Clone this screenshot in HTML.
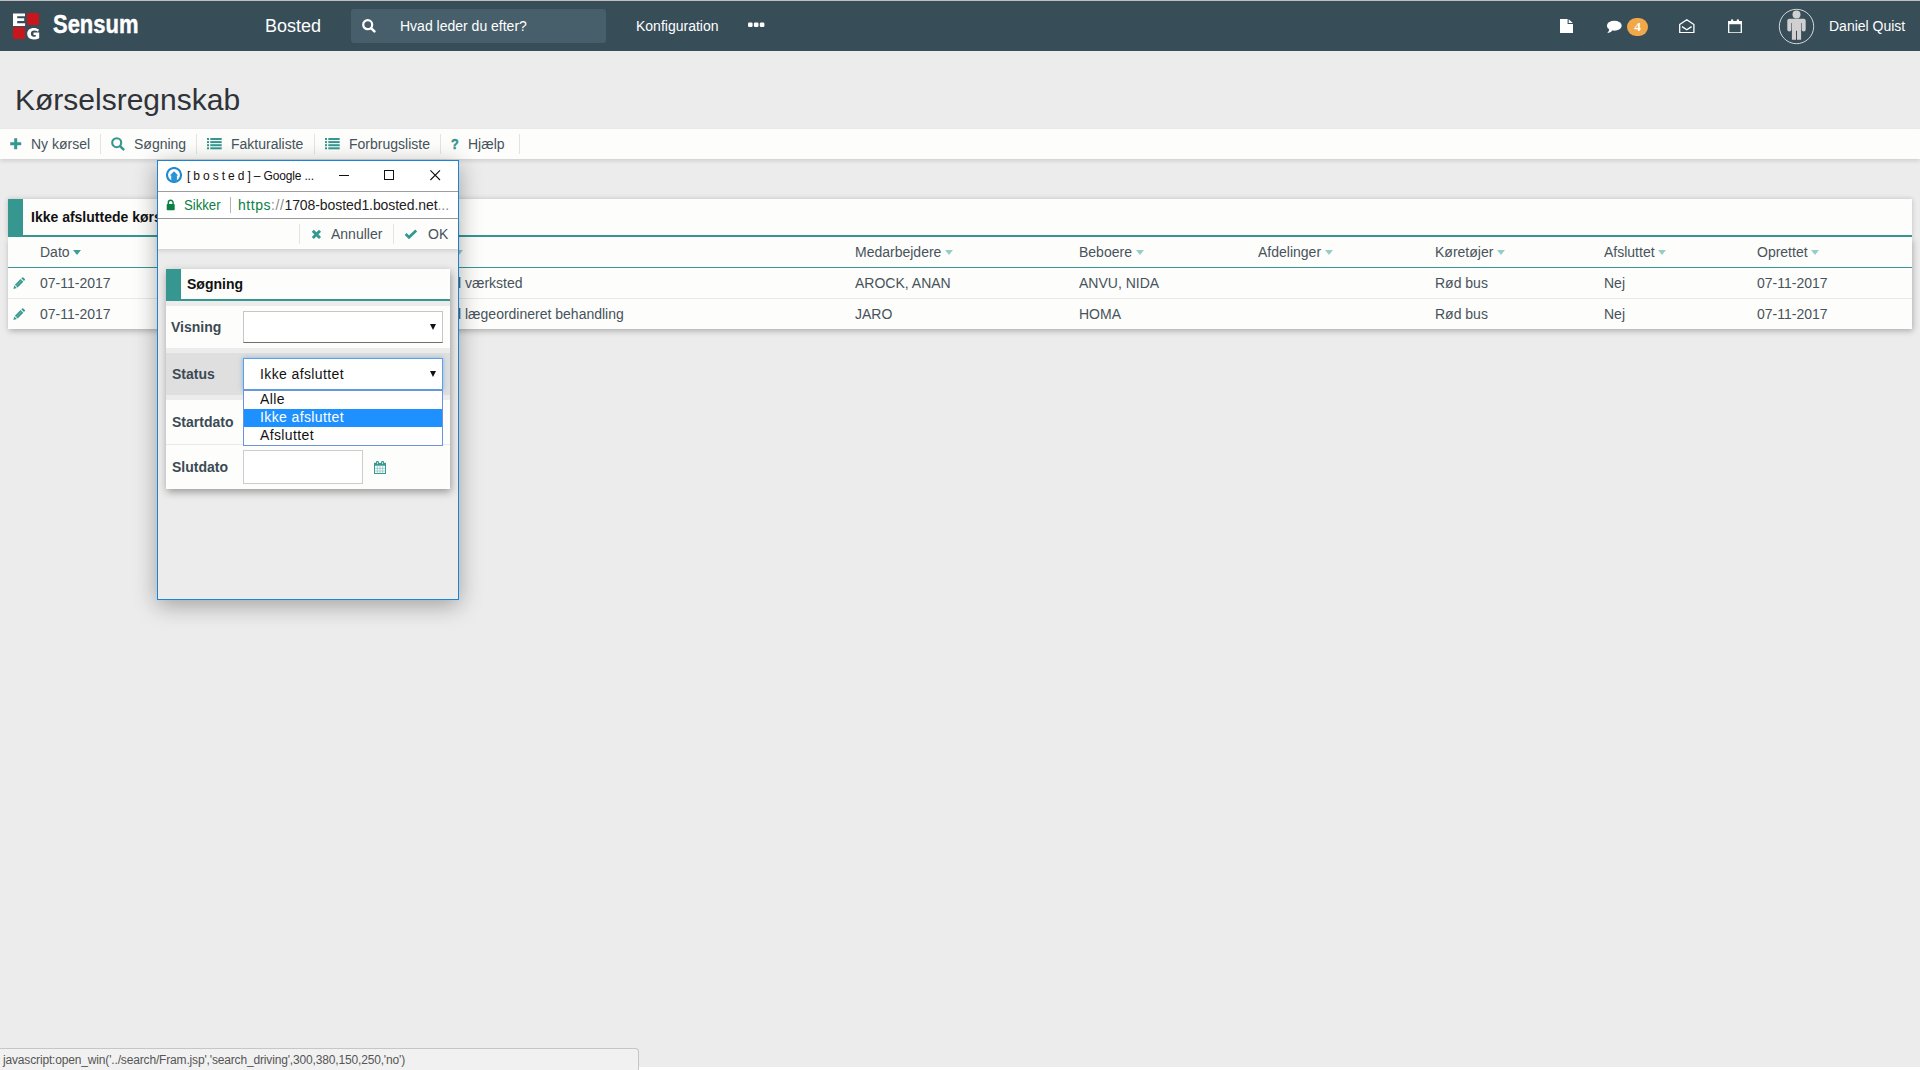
<!DOCTYPE html>
<html lang="da">
<head>
<meta charset="utf-8">
<title>Kørselsregnskab</title>
<style>
*{box-sizing:border-box;margin:0;padding:0}
html,body{width:1920px;height:1070px;overflow:hidden}
body{background:#ececec;font-family:"Liberation Sans",sans-serif;font-size:14px;color:#3b4a54;position:relative}
.abs{position:absolute}
.t{position:absolute;white-space:nowrap;line-height:1}
/* top nav */
#topline{left:0;top:0;width:1920px;height:1px;background:#c3bebe}
#nav{left:0;top:1px;width:1920px;height:50px;background:#374d58}
#nav .t{color:#fff}
#searchbox{left:351px;top:8px;width:255px;height:34px;background:#475f6b;border-radius:3px}
/* toolbar */
#toolbar{left:0;top:129px;width:1920px;height:30px;background:#fdfdfb;box-shadow:0 2px 4px rgba(0,0,0,.12)}
.tb{font-size:14px;color:#47535c;top:8px}
.sep{position:absolute;top:5px;width:1px;height:20px;background:#e4e4e2}
/* main panel */
#panel{left:8px;top:199px;width:1904px;height:130px;background:#fdfdfb}
.teal{background:#35978f}
.th{font-size:14px;color:#47535c;top:46px}
.td{font-size:14px;color:#47535c}
.cr{display:inline-block;width:0;height:0;border-left:4.700px solid transparent;border-right:4.700px solid transparent;border-top:5.200px solid #96cdc8;margin-left:3.800px;vertical-align:2px}
.cr.dk{border-top-color:#3aa19a}
.car{position:absolute;width:0;height:0;border-left:4.5px solid transparent;border-right:4.5px solid transparent;border-top:5px solid #8fcfca;top:51px}
/* popup */
#pop{left:157px;top:160px;width:302px;height:440px;background:#ececec;border:1px solid #1a84d8;box-shadow:0 5px 22px rgba(0,0,0,.33)}
.lbl{font-size:14px;font-weight:bold;color:#3b4a54}
.opt{font-size:14px;color:#111;letter-spacing:.38px}
.arrow{width:0;height:0;border-left:3.500px solid transparent;border-right:3.500px solid transparent;border-top:6px solid #111}
</style>
</head>
<body>
<div class="abs" id="topline"></div>
<div class="abs" id="nav">
  <!-- logo -->
  <svg class="abs" id="logo" style="left:13px;top:12px" width="27" height="27" viewBox="0 0 27 27">
    <rect x="14" y="0" width="12" height="12" rx="1.2" fill="#c8161d"/>
    <rect x="0" y="14" width="12" height="12" rx="1.2" fill="#c8161d"/>
    <path d="M0 0.400h12v2.900h-7.800v1.900h7v2.700h-7v2.300h7.900v2.900h-12.100z" fill="#fff"/>
    <path d="M26 16.4c-1.4-.9-3.2-1.5-5.2-1.5-4 0-6.6 2.300-6.600 5.800 0 3.500 2.500 5.700 6.500 5.700 2 0 3.900-.4 5.500-1.200v-5.600h-5.700v2.500h2.300v1.300c-.5.200-1.200.300-1.900.300-1.900 0-3-1.100-3-3 0-1.900 1.200-3.100 3.200-3.100 1.400 0 2.700.400 3.900 1.200z" fill="#fff"/>
  </svg>
  <div class="t" id="sensum" style="left:53px;top:10px;font-size:26px;font-weight:bold;transform-origin:0 50%;transform:scaleX(.845);-webkit-text-stroke:.45px #fff">Sensum</div>
  <div class="t" id="bosted" style="left:265px;top:16px;font-size:18px">Bosted</div>
  <div class="abs" id="searchbox"></div>
  <svg class="abs" style="left:362px;top:18px" width="14" height="14" viewBox="0 0 14 14"><circle cx="5.700" cy="5.700" r="4.500" fill="none" stroke="#fff" stroke-width="2.200"/><path d="M9.300 9.300L12.400 12.400" stroke="#fff" stroke-width="2.500" stroke-linecap="round"/></svg>
  <div class="t" id="hvad" style="left:400px;top:18px;font-size:14px">Hvad leder du efter?</div>
  <div class="t" id="konf" style="left:636px;top:18px;font-size:14px">Konfiguration</div>
  <svg class="abs" style="left:748px;top:21px" width="17" height="6" viewBox="0 0 17 6"><rect x="0" y="0.500" width="4.600" height="4.600" rx="1.300" fill="#fff"/><rect x="5.900" y="0.500" width="4.600" height="4.600" rx="1.300" fill="#fff"/><rect x="11.800" y="0.500" width="4.600" height="4.600" rx="1.300" fill="#fff"/></svg>
  <!-- file -->
  <svg class="abs" style="left:1560px;top:17.700px" width="13" height="14.300" viewBox="0 0 13 15" preserveAspectRatio="none"><path d="M0 0h7.600v5.200h5.400v9.500h-13z" fill="#fff"/><path d="M8.700 0.300l4.100 4.000h-4.100z" fill="#fff"/></svg>
  <!-- comment -->
  <svg class="abs" style="left:1606px;top:19px" width="16" height="14" viewBox="0 0 16 14"><ellipse cx="8.300" cy="5.800" rx="7.400" ry="5.000" fill="#fff"/><path d="M3.200 8.500c.2 1.800-.6 3.200-2.000 4.400 2.300-.1 4.000-1.000 5.200-2.500z" fill="#fff"/></svg>
  <div class="abs" id="badge" style="left:1627px;top:17px;width:21px;height:18px;border-radius:9px;background:#f0a848"></div>
  <div class="t" style="left:1627px;width:21px;text-align:center;top:18.700px;font-family:'Liberation Serif',serif;font-weight:bold;font-size:13.500px">4</div>
  <!-- envelope open -->
  <svg class="abs" style="left:1679px;top:17.700px" width="16" height="14.300" viewBox="0 0 16 15" preserveAspectRatio="none"><path d="M0.700 5.700L7.800 0.700L14.900 5.700V14.200H0.700z" fill="none" stroke="#fff" stroke-width="1.300" stroke-linejoin="round"/><path d="M3.000 8.000L7.800 11.300L12.600 8.000" fill="none" stroke="#fff" stroke-width="1.300"/></svg>
  <!-- calendar -->
  <svg class="abs" style="left:1728px;top:17.500px" width="14" height="14.500" viewBox="0 0 14 15" preserveAspectRatio="none"><path d="M0.700 2.600h12.600v11.700h-12.600z" fill="none" stroke="#fff" stroke-width="1.300"/><rect x="0.700" y="2.600" width="12.600" height="2.800" fill="#fff"/><rect x="3.000" y="0.300" width="2.200" height="3.600" rx="1" fill="#fff"/><rect x="8.800" y="0.300" width="2.200" height="3.600" rx="1" fill="#fff"/></svg>
  <!-- avatar -->
  <svg class="abs" style="left:1778px;top:7px" width="37" height="37" viewBox="0 0 37 37"><circle cx="18.500" cy="18.500" r="17.200" fill="none" stroke="#d6d6d6" stroke-width="1"/><circle cx="18.500" cy="6.600" r="4.000" fill="#d0d0d0"/><path d="M11.300 10.800h14.400a2 2 0 0 1 2 2v8.800a2 2 0 0 1-4 0v-6.500h-.6v16.700h-4.100v-9h-1v9h-4.100v-16.700h-.6v6.500a2 2 0 0 1-4 0v-8.800a2 2 0 0 1 2-2z" fill="#d0d0d0"/></svg>
  <div class="t" id="user" style="left:1829px;top:18px;font-size:14px">Daniel Quist</div>
</div>

<div class="t" id="title" style="left:15px;top:85px;font-size:30px;color:#2f3338">Kørselsregnskab</div>

<div class="abs" id="toolbar">
  <svg class="abs" style="left:10px;top:9px" width="12" height="12" viewBox="0 0 12 12"><path d="M4.200 0.200h3v4h4v3h-4v4h-3v-4h-4v-3h4z" fill="#35978f"/></svg>
  <div class="t tb" style="left:31px">Ny kørsel</div><div class="sep" style="left:100px"></div>
  <svg class="abs ic-s" style="left:111px;top:8px" width="14" height="14" viewBox="0 0 14 14"><circle cx="5.700" cy="5.700" r="4.500" fill="none" stroke="#35978f" stroke-width="2.100"/><path d="M9.300 9.300L12.400 12.400" stroke="#35978f" stroke-width="2.400" stroke-linecap="round"/></svg>
  <div class="t tb" style="left:134px">Søgning</div><div class="sep" style="left:196px"></div>
  <svg class="abs" style="left:207px;top:9px" width="15" height="12" viewBox="0 0 15 12"><g fill="#35978f"><rect x="0" y="0" width="2" height="2"/><rect x="3.300" y="0" width="11.400" height="2"/><rect x="0" y="3.100" width="2" height="2"/><rect x="3.300" y="3.100" width="11.400" height="2"/><rect x="0" y="6.200" width="2" height="2"/><rect x="3.300" y="6.200" width="11.400" height="2"/><rect x="0" y="9.300" width="2" height="2"/><rect x="3.300" y="9.300" width="11.400" height="2"/></g></svg>
  <div class="t tb" style="left:231px">Fakturaliste</div><div class="sep" style="left:314px"></div>
  <svg class="abs" style="left:325px;top:9px" width="15" height="12" viewBox="0 0 15 12"><g fill="#35978f"><rect x="0" y="0" width="2" height="2"/><rect x="3.300" y="0" width="11.400" height="2"/><rect x="0" y="3.100" width="2" height="2"/><rect x="3.300" y="3.100" width="11.400" height="2"/><rect x="0" y="6.200" width="2" height="2"/><rect x="3.300" y="6.200" width="11.400" height="2"/><rect x="0" y="9.300" width="2" height="2"/><rect x="3.300" y="9.300" width="11.400" height="2"/></g></svg>
  <div class="t tb" style="left:349px">Forbrugsliste</div><div class="sep" style="left:440px"></div>
  <div class="t" style="left:451px;top:8px;font-size:14px;font-weight:bold;color:#35978f;-webkit-text-stroke:.5px #35978f;transform-origin:0 50%;transform:scaleX(.9)">?</div>
  <div class="t tb" style="left:468px">Hjælp</div><div class="sep" style="left:519px"></div>
</div>

<div class="abs" style="left:8px;top:199px;width:1904px;height:38px;box-shadow:0 0 5px rgba(0,0,0,.2)"></div>
<div class="abs" style="left:8px;top:238px;width:1904px;height:91px;box-shadow:1px 2px 6px rgba(0,0,0,.27)"></div>
<div class="abs" id="panel">
  <div class="abs teal" style="left:0;top:0;width:15px;height:38px"></div>
  <div class="abs teal" style="left:0;top:36px;width:1904px;height:2px"></div>
  <div class="t" id="ptitle" style="left:23px;top:11px;font-size:14px;font-weight:bold;color:#111">Ikke afsluttede kørsler</div>
  <div class="abs teal" style="left:0;top:68px;width:1904px;height:1px"></div>
  <div class="abs" style="left:0;top:99px;width:1904px;height:1px;background:#e9e9e7"></div>
  <div class="t th" style="left:32px">Dato<i class="cr dk"></i></div>
  <i class="cr" style="position:absolute;left:446.500px;top:51px;margin:0"></i>
  <div class="t th" style="left:847px">Medarbejdere<i class="cr"></i></div>
  <div class="t th" style="left:1071px">Beboere<i class="cr"></i></div>
  <div class="t th" style="left:1250px">Afdelinger<i class="cr"></i></div>
  <div class="t th" style="left:1427px">Køretøjer<i class="cr"></i></div>
  <div class="t th" style="left:1596px">Afsluttet<i class="cr"></i></div>
  <div class="t th" style="left:1749px">Oprettet<i class="cr"></i></div>
  <svg class="abs" style="left:4.800px;top:78.200px" width="12.300" height="12.300" viewBox="0 0 13 13"><path d="M0.400 12.600L1.300 8.900L4.100 11.700z" fill="#35978f"/><path d="M2.000 8.100L8.000 2.100L10.900 5.000L4.900 11.000z" fill="#35978f"/><path d="M8.800 1.400L9.700 0.500a.8.800 0 0 1 1.100 0L12.500 2.200a.8.800 0 0 1 0 1.100L11.600 4.200z" fill="#35978f"/><path d="M3.400 9.600L9.400 3.600" stroke="#8ccbc5" stroke-width=".7"/></svg>
  <svg class="abs" style="left:4.800px;top:109.200px" width="12.300" height="12.300" viewBox="0 0 13 13"><path d="M0.400 12.600L1.300 8.900L4.100 11.700z" fill="#35978f"/><path d="M2.000 8.100L8.000 2.100L10.900 5.000L4.900 11.000z" fill="#35978f"/><path d="M8.800 1.400L9.700 0.500a.8.800 0 0 1 1.100 0L12.500 2.200a.8.800 0 0 1 0 1.100L11.600 4.200z" fill="#35978f"/><path d="M3.400 9.600L9.400 3.600" stroke="#8ccbc5" stroke-width=".7"/></svg>
  <div class="t td" style="left:32px;top:77px">07-11-2017</div>
  <div class="t td" style="left:32px;top:108px">07-11-2017</div>
  <div class="t td" style="left:450px;top:77px">l værksted</div>
  <div class="t td" style="left:450px;top:108px">l lægeordineret behandling</div>
  <div class="t td" style="left:847px;top:77px">AROCK, ANAN</div>
  <div class="t td" style="left:847px;top:108px">JARO</div>
  <div class="t td" style="left:1071px;top:77px">ANVU, NIDA</div>
  <div class="t td" style="left:1071px;top:108px">HOMA</div>
  <div class="t td" style="left:1427px;top:77px">Rød bus</div>
  <div class="t td" style="left:1427px;top:108px">Rød bus</div>
  <div class="t td" style="left:1596px;top:77px">Nej</div>
  <div class="t td" style="left:1596px;top:108px">Nej</div>
  <div class="t td" style="left:1749px;top:77px">07-11-2017</div>
  <div class="t td" style="left:1749px;top:108px">07-11-2017</div>
</div>

<div class="abs" id="pop">
  <!-- coordinates inside are relative to popup content box origin (158,161) -->
  <div class="abs" id="ptbar" style="left:0;top:0;width:300px;height:30px;background:#fff"></div>
  <svg class="abs" id="fav" style="left:8px;top:6px" width="16" height="16" viewBox="0 0 16 16"><circle cx="8" cy="8" r="7" fill="#fff" stroke="#1f8ad2" stroke-width="2.100"/><path d="M8 4.300L12.200 8.400H10.900V14.500H5.200V8.400H3.900z" fill="#2a93d6"/></svg>
  <div class="t" id="wtitle" style="left:29px;top:9px;font-size:12px;color:#111;letter-spacing:-.16px">[ b o s t e d ] – Google ...</div>
  <div class="abs" style="left:181px;top:14px;width:10px;height:1px;background:#111"></div>
  <div class="abs" style="left:226px;top:9px;width:10px;height:10px;border:1px solid #111"></div>
  <svg class="abs" style="left:272px;top:9px" width="11" height="11" viewBox="0 0 11 11"><path d="M0.400 0.400L10.000 10.000M10.000 0.400L0.400 10.000" stroke="#111" stroke-width="1.100"/></svg>
  <div class="abs" style="left:0;top:30px;width:300px;height:1px;background:#9d9d9d"></div>
  <div class="abs" id="addr" style="left:0;top:31px;width:300px;height:26px;background:#fff"></div>
  <svg class="abs" style="left:8px;top:38px" width="10" height="12" viewBox="0 0 10 12"><path d="M2.300 5.200V3.600a2.400 2.400 0 0 1 4.800 0V5.200" fill="none" stroke="#0b8043" stroke-width="1.400"/><rect x="0.700" y="4.900" width="8.000" height="6.300" rx="0.800" fill="#0b8043"/></svg>
  <div class="t" id="sikker" style="left:26px;top:37px;font-size:14px;color:#0b8043;transform-origin:0 50%;transform:scaleX(.94)">Sikker</div>
  <div class="abs" style="left:72px;top:36px;width:1px;height:16px;background:#b5b5b5"></div>
  <div class="t" id="url" style="left:80px;top:37px;font-size:14px;color:#222"><span style="color:#0b8043;letter-spacing:.55px">https</span><span style="color:#8a8a8a;letter-spacing:.55px">://</span><span style="letter-spacing:-.08px">1708-bosted1.bosted.net<span style="color:#8a8a8a">...</span></span></div>
  <div class="abs" style="left:0;top:57px;width:300px;height:1px;background:#9d9d9d"></div>
  <div class="abs" id="ptool" style="left:0;top:58px;width:300px;height:30px;background:#fdfdfb;box-shadow:0 2px 4px rgba(0,0,0,.12)"></div>
  <div class="sep" style="left:141px;top:63px"></div>
  <svg class="abs" style="left:153px;top:68px" width="11" height="11" viewBox="0 0 11 11"><path d="M1.800 1.800L9.000 9.000M9.000 1.800L1.800 9.000" stroke="#35978f" stroke-width="3.000"/></svg>
  <div class="t tb" id="annuller" style="left:173px;top:66px">Annuller</div>
  <div class="sep" style="left:235px;top:63px"></div>
  <svg class="abs" style="left:246px;top:68px" width="14" height="11" viewBox="0 0 14 11"><path d="M1.600 5.100L5.000 8.300L12.200 1.500" fill="none" stroke="#35978f" stroke-width="2.700"/></svg>
  <div class="t tb" id="ok" style="left:270px;top:66px">OK</div>

  <!-- inner panel: abs x 166..450, y 269..489 => rel 8..292, 108..328 -->
  <div class="abs" id="ipanel" style="left:8px;top:108px;width:284px;height:220px;background:#fdfdfb;box-shadow:1px 3px 8px rgba(0,0,0,.36)"></div>
  <div class="abs teal" style="left:8px;top:108px;width:15px;height:32px"></div>
  <div class="abs teal" style="left:8px;top:138px;width:284px;height:2px"></div>
  <div class="t" id="sogn" style="left:29px;top:116px;font-size:14px;font-weight:bold;color:#111">Søgning</div>
  <div class="abs band" style="left:8px;top:140px;width:284px;height:5px;background:#ececec"></div>
  <div class="abs band" style="left:8px;top:187px;width:284px;height:5px;background:#ececec"></div>
  <div class="abs" style="left:8px;top:192px;width:284px;height:42px;background:#dfdfdf"></div>
  <div class="abs band" style="left:8px;top:234px;width:284px;height:5px;background:#ececec"></div>
  <div class="abs" style="left:8px;top:283px;width:284px;height:1px;background:#e9e9e7"></div>
  <div class="t lbl" style="left:13px;top:159px">Visning</div>
  <div class="t lbl" style="left:14px;top:206px">Status</div>
  <div class="t lbl" style="left:14px;top:254px">Startdato</div>
  <div class="t lbl" style="left:14px;top:299px">Slutdato</div>
  <!-- select 1: abs 243..442 x, 311..342 y -->
  <div class="abs" id="sel1" style="left:85px;top:150px;width:200px;height:32px;background:#fff;border:1px solid #c6c6c6;border-bottom-color:#707070"></div>
  <div class="abs arrow" style="left:272px;top:163px"></div>
  <!-- select 2: abs 243..443, 358..390 -->
  <div class="abs" id="sel2" style="left:85px;top:197px;width:200px;height:32px;background:#fff;border:1px solid #5ba0e2;box-shadow:0 0 5px rgba(70,140,210,.55)"></div>
  <div class="abs arrow" style="left:272px;top:210px"></div>
  <div class="t opt" id="selt" style="left:102px;top:206px">Ikke afsluttet</div>
  <!-- dropdown: abs 243..443, 390..445 -->
  <div class="abs" id="dd" style="left:85px;top:229px;width:200px;height:56px;background:#fff;border:1px solid #6f93d8"></div>
  <div class="abs" style="left:86px;top:248px;width:198px;height:18px;background:#1e90ff"></div>
  <div class="t opt" style="left:102px;top:231px">Alle</div>
  <div class="t opt" style="left:102px;top:249px;color:#fff">Ikke afsluttet</div>
  <div class="t opt" style="left:102px;top:267px">Afsluttet</div>
  <!-- slutdato input abs 243..362, 450..483 -->
  <div class="abs" style="left:85px;top:289px;width:120px;height:34px;background:#fff;border:1px solid #ccc"></div>
  <svg class="abs" id="cal" style="left:216px;top:300px" width="12" height="13" viewBox="0 0 12 13"><rect x="0.500" y="2.400" width="11" height="10.100" fill="#fff" stroke="#35978f" stroke-width="1"/><rect x="0.500" y="2.400" width="11" height="2.300" fill="#35978f"/><path d="M3.300 4.700V12.500M6.000 4.700V12.500M8.700 4.700V12.500M0.500 7.400H11.500M0.500 10.000H11.500" stroke="#6bb5ae" stroke-width="0.600"/><rect x="1.900" y="0" width="3.000" height="3.700" rx="1.200" fill="#35978f"/><rect x="2.950" y="1.100" width=".9" height="2.000" fill="#d5edeb"/><rect x="7.100" y="0" width="3.000" height="3.700" rx="1.200" fill="#35978f"/><rect x="8.150" y="1.100" width=".9" height="2.000" fill="#d5edeb"/></svg>
</div>

<!-- bottom white strip + status bar -->
<div class="abs" style="left:0;top:1067px;width:1920px;height:3px;background:#fff"></div>
<div class="abs" id="sbar" style="left:0;top:1048px;width:639px;height:24px;background:#f1f1f1;border:1px solid #c6c6c6;border-left:none;border-bottom:none;border-top-right-radius:4px"></div>
<div class="t" id="sbt" style="left:3px;top:1054px;font-size:12px;color:#555;letter-spacing:-.16px">javascript:open_win('../search/Fram.jsp','search_driving',300,380,150,250,'no')</div>

</body>
</html>
